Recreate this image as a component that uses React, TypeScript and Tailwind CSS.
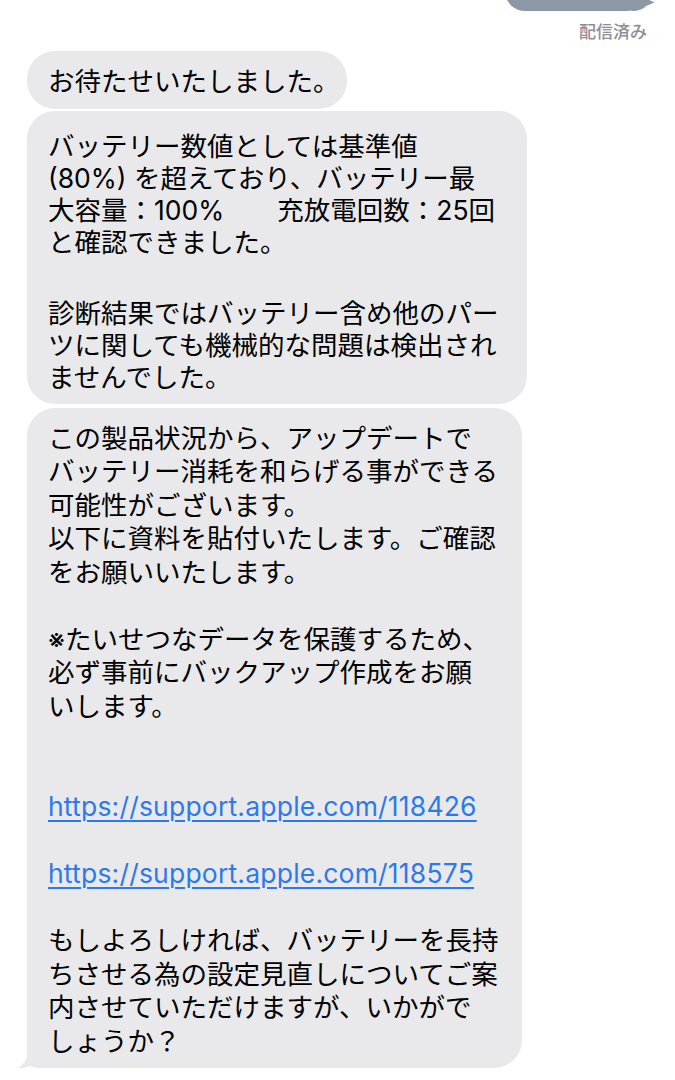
import React from "react";

const B2 = [
  "バッテリー数値としては基準値",
  "(80%) を超えており、バッテリー最",
  "大容量：100%\u3000\u3000充放電回数：25回",
  "と確認できました。",
  "",
  "診断結果ではバッテリー含め他のパー",
  "ツに関しても機械的な問題は検出され",
  "ませんでした。",
];

const B3: { t: string; link?: boolean }[] = [
  { t: "この製品状況から、アップデートで" },
  { t: "バッテリー消耗を和らげる事ができる" },
  { t: "可能性がございます。" },
  { t: "以下に資料を貼付いたします。ご確認" },
  { t: "をお願いいたします。" },
  { t: "" },
  { t: "※たいせつなデータを保護するため、" },
  { t: "必ず事前にバックアップ作成をお願" },
  { t: "いします。" },
  { t: "" },
  { t: "" },
  { t: "https://support.apple.com/118426", link: true },
  { t: "" },
  { t: "https://support.apple.com/118575", link: true },
  { t: "" },
  { t: "もしよろしければ、バッテリーを長持" },
  { t: "ちさせる為の設定見直しについてご案" },
  { t: "内させていただけますが、いかがで" },
  { t: "しょうか？" },
];

function Line({ t, link }: { t: string; link?: boolean }) {
  if (link) {
    return (
      <div className="whitespace-pre h-[33.5px]">
        <span className="text-[#2b79ee] tracking-[0.2px] underline decoration-[1.5px] underline-offset-[4px]">{t}</span>
      </div>
    );
  }
  return <div className="whitespace-pre h-[33.5px]">{t === "" ? "\u00a0" : t}</div>;
}

export default function App() {
  return (
    <div className="w-[675px] h-[1080px] bg-white overflow-hidden flex flex-col font-[Inter,'Noto_Sans_CJK_JP',sans-serif] text-black">
      {/* sent bubble (cut off) */}
      <div className="flex justify-end pr-[28px]">
        <div className="relative w-[142px] h-[40px] -mt-[29px] rounded-[20px] bg-[#8c98a6]">
          <svg
            className="absolute right-[-9px] bottom-0"
            width="24"
            height="20"
            viewBox="0 0 24 20"
          >
            <path
              d="M0 0 L15 0 L15 4 C15 8 18 10 23 11 C20 12.5 17 14 14 15 C11 18.5 6 20 0 20 Z"
              fill="#8c98a6"
            />
          </svg>
        </div>
      </div>
      <div className="flex justify-end pr-[28px] mt-[11px]">
        <span className="text-[17px] leading-[20px] font-medium text-[#8e8e93]">配信済み</span>
      </div>

      <div className="flex flex-col items-start pl-[27px] mt-[9px] text-[26.5px]">
        <div className="w-[320px] rounded-[28px] bg-[#e9e9eb] pl-[21px] pr-[10px] pt-[14px] pb-[10px] leading-[33.5px]">
          <Line t="お待たせいたしました。" />
        </div>

        <div className="mt-[2px] w-[500px] rounded-[28px] bg-[#e9e9eb] pl-[21px] pr-[10px] pt-[19px] pb-[11px] leading-[32px]">
          {B2.map((t, i) =>
            t === "" ? (
              <div key={i} className="h-[39px]" />
            ) : (
              <div key={i} className="whitespace-pre h-[32px]">
                {t}
              </div>
            )
          )}
        </div>

        <div className="relative mt-[4px] w-[495px] rounded-[28px] rounded-bl-[10px] bg-[#e9e9eb] pl-[21px] pr-[10px] pt-[14px] pb-[10px] leading-[33.5px]">
          {B3.map((l, i) => (
            <Line key={i} t={l.t} link={l.link} />
          ))}
          <svg
            className="absolute left-[-9px] bottom-0"
            width="34"
            height="26"
            viewBox="0 0 34 26"
          >
            <path
              d="M9 0 L9 12 C9 19 5 23 0 26 C6 26.5 11 25 15 22 C19 24.5 24 26 30 26 L34 26 L34 0 Z"
              fill="#e9e9eb"
            />
          </svg>
        </div>
      </div>
    </div>
  );
}
